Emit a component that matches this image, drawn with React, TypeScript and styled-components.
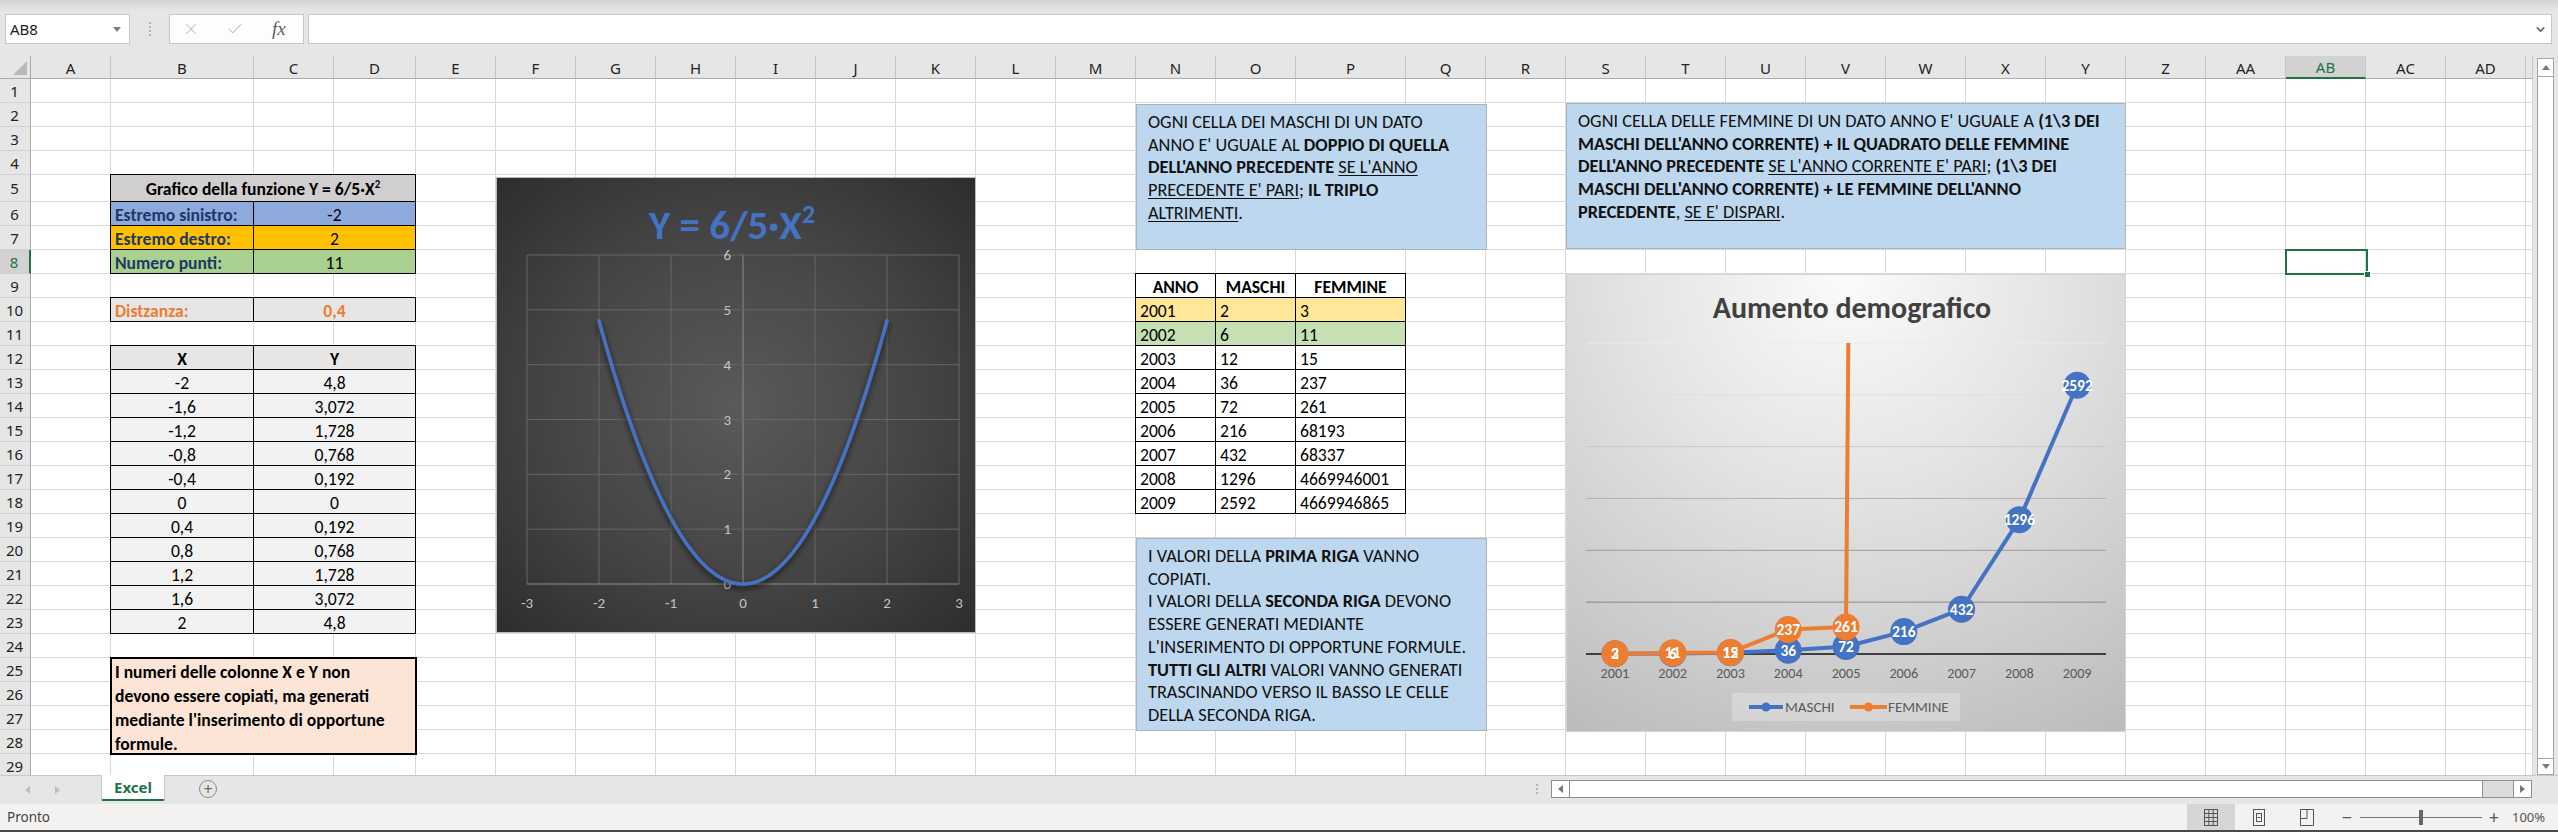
import React, { ReactNode } from 'react';
import styled, { createGlobalStyle } from 'styled-components';
import { X, Check, ChevronDown } from 'lucide-react';

const GREEN = '#217346';
const CELL_FONT = `"Carlito", "Lato", "Open Sans", sans-serif`;
const UI_FONT = `"Noto Sans", "Open Sans", sans-serif`;

const COLS = ['A','B','C','D','E','F','G','H','I','J','K','L','M','N','O','P','Q','R','S','T','U','V','W','X','Y','Z','AA','AB','AC','AD'];
const colWidth = (c: string) => (c === 'B' ? 143 : c === 'D' ? 82 : c === 'P' ? 110 : 80);
const ROWS = Array.from({ length: 29 }, (_, i) => i + 1);
const rowHeight = (r: number) => (r === 5 ? 27 : 24);

const GlobalStyle = createGlobalStyle`
  html, body { margin: 0; padding: 0; background: #e6e6e6; overflow: hidden; }
  *, *::before, *::after { box-sizing: border-box; }
`;

const Window = styled.div`
  width: 2558px;
  height: 832px;
  display: flex;
  flex-direction: column;
  background: #e6e6e6;
  font-family: ${UI_FONT};
  color: #222;
  overflow: hidden;
`;

/* ---------- formula bar ---------- */
const FormulaBar = styled.div`
  flex: none;
  height: 56px;
  display: flex;
  align-items: flex-start;
  padding: 14px 6px 0 5px;
  background: linear-gradient(180deg, #d2d2d2 0px, #e0e0e0 6px, #e6e6e6 12px);
`;
const NameBox = styled.div`
  width: 125px;
  height: 30px;
  background: #fff;
  border: 1px solid #c6c6c6;
  display: flex;
  align-items: center;
  justify-content: space-between;
  padding: 0 8px 0 4px;
  font-size: 15px;
  color: #1e1e1e;
`;
const Caret = styled.span`
  width: 0;
  height: 0;
  border-left: 4px solid transparent;
  border-right: 4px solid transparent;
  border-top: 5px solid #808080;
`;
const Grip = styled.div`
  width: 39px;
  height: 30px;
  display: flex;
  align-items: center;
  justify-content: center;
  &::before {
    content: '';
    width: 2px;
    height: 14px;
    background: repeating-linear-gradient(#b4b4b4 0 2px, transparent 2px 4px);
  }
`;
const FxButtons = styled.div`
  width: 135px;
  height: 30px;
  background: #fdfdfd;
  border: 1px solid #c6c6c6;
  display: flex;
  align-items: center;
  padding-left: 12px;
  gap: 26px;
  color: #bdbdbd;
`;
const Fx = styled.span`
  font-family: "Liberation Serif", serif;
  font-style: italic;
  font-size: 19px;
  color: #5e5e5e;
  margin-left: 2px;
`;
const FormulaInput = styled.div`
  flex: 1;
  margin-left: 4px;
  height: 30px;
  background: #fff;
  border: 1px solid #c6c6c6;
  display: flex;
  align-items: center;
  justify-content: flex-end;
  padding-right: 4px;
  color: #6a6a6a;
`;

/* ---------- sheet ---------- */
const SheetArea = styled.div`
  flex: none;
  height: 719px;
  display: flex;
`;
const Viewport = styled.div`
  position: relative;
  width: 2533px;
  height: 719px;
  overflow: hidden;
  background: #fff;
`;
const Grid = styled.div`
  display: grid;
  grid-template-columns: 31px ${COLS.map((c) => `${colWidth(c)}px`).join(' ')} 7px;
  grid-template-rows: 23px ${ROWS.map((r) => `${rowHeight(r)}px`).join(' ')};
`;
const Corner = styled.div`
  position: relative;
  background: #e6e6e6;
  border-right: 1px solid #ababab;
  border-bottom: 1px solid #ababab;
  &::after {
    content: '';
    position: absolute;
    right: 3px;
    bottom: 3px;
    border-style: solid;
    border-width: 0 0 14px 14px;
    border-color: transparent transparent #b9b9b9 transparent;
  }
`;
const ColHead = styled.div<{ $sel?: boolean }>`
  background: ${(p) => (p.$sel ? '#d2d2d2' : '#e6e6e6')};
  border-right: 1px solid #c4c4c4;
  border-bottom: ${(p) => (p.$sel ? `2px solid ${GREEN}` : '1px solid #ababab')};
  color: ${(p) => (p.$sel ? GREEN : '#222')};
  display: flex;
  align-items: center;
  justify-content: center;
  font-size: 15px;
  padding-top: 1px;
`;
const RowHead = styled.div<{ $sel?: boolean }>`
  background: ${(p) => (p.$sel ? '#d2d2d2' : '#e6e6e6')};
  border-bottom: 1px solid #d0d0d0;
  border-right: ${(p) => (p.$sel ? `2px solid ${GREEN}` : '1px solid #ababab')};
  color: ${(p) => (p.$sel ? GREEN : '#222')};
  display: flex;
  align-items: center;
  justify-content: center;
  font-size: 15px;
  padding-right: 1px;
`;
const Cell = styled.div`
  background: #fff;
  border-right: 1px solid #d9d9d9;
  border-bottom: 1px solid #d9d9d9;
`;
const DataCell = styled.div<{ $span: number; $bg: string; $color: string; $bold: boolean; $align: 'left' | 'center' }>`
  grid-column: span ${(p) => p.$span};
  position: relative;
  z-index: 1;
  margin: -1px 0 0 -1px;
  border: 1px solid #000;
  background: ${(p) => p.$bg};
  color: ${(p) => p.$color};
  font-family: ${CELL_FONT};
  font-size: 17.6px;
  font-weight: ${(p) => (p.$bold ? 700 : 400)};
  display: flex;
  align-items: center;
  justify-content: ${(p) => (p.$align === 'center' ? 'center' : 'flex-start')};
  padding: 2px 4px 0;
  white-space: nowrap;
`;
const NoteCell = styled.div`
  grid-column: span 3;
  grid-row: span 4;
  position: relative;
  z-index: 1;
  margin: -1px;
  border: 2px solid #000;
  background: #fce4d6;
  color: #000;
  font-family: ${CELL_FONT};
  font-size: 17.6px;
  font-weight: 700;
  line-height: 24px;
  padding: 1px 3px 0;
  white-space: nowrap;
`;
const Sup = styled.sup`
  font-size: 11px;
  vertical-align: 7px;
  line-height: 0;
`;

/* ---------- floating objects ---------- */
const Floating = styled.div<{ $x: number; $y: number; $w: number; $h: number }>`
  position: absolute;
  left: ${(p) => p.$x}px;
  top: ${(p) => p.$y}px;
  width: ${(p) => p.$w}px;
  height: ${(p) => p.$h}px;
  z-index: 2;
`;
const TextBox = styled(Floating)`
  background: #bdd7ee;
  border: 1px solid #a9b4bf;
  padding: 6px 11px;
  font-family: ${CELL_FONT};
  font-size: 18.3px;
  line-height: 22.7px;
  color: #111;
`;
const Line = styled.div`
  white-space: nowrap;
`;
const B = styled.b`
  font-weight: 700;
`;
const U = styled.span`
  text-decoration: underline;
  text-underline-offset: 2px;
`;
const DarkChart = styled(Floating)`
  border: 1px solid #bcbcbc;
  background: radial-gradient(ellipse 72% 72% at 50% 50%, #5a5a5a 0%, #444 55%, #2c2c2c 100%);
`;
const LightChart = styled(Floating)`
  border: 1px solid #d4d4d4;
  background: radial-gradient(ellipse 95% 115% at 50% 0%, #fbfbfb 0%, #e4e4e4 40%, #cacaca 80%, #bcbcbc 100%);
`;
const Selection = styled.div`
  position: absolute;
  left: 2285px;
  top: 193px;
  width: 83px;
  height: 26px;
  border: 2px solid ${GREEN};
  z-index: 3;
  &::after {
    content: '';
    position: absolute;
    right: -5px;
    bottom: -5px;
    width: 7px;
    height: 7px;
    background: ${GREEN};
    border: 1px solid #fff;
  }
`;

/* ---------- vertical scrollbar ---------- */
const VScroll = styled.div`
  width: 25px;
  height: 719px;
  display: flex;
  flex-direction: column;
  padding: 2px 4px 0 4px;
  background: #e6e6e6;
`;
const ScrollBtn = styled.div<{ $h: number }>`
  flex: none;
  height: ${(p) => p.$h}px;
  background: #fff;
  border: 1px solid #a6a6a6;
  display: flex;
  align-items: center;
  justify-content: center;
`;
const ScrollTrack = styled.div`
  flex: 1;
  background: #fff;
  border-left: 1px solid #a6a6a6;
  border-right: 1px solid #a6a6a6;
`;
const Tri = styled.span<{ $dir: 'up' | 'down' | 'left' | 'right'; $c?: string }>`
  width: 0;
  height: 0;
  border: 4px solid transparent;
  ${(p) =>
    p.$dir === 'up'
      ? `border-bottom: 5px solid ${p.$c || '#7a7a7a'}; border-top-width: 0;`
      : p.$dir === 'down'
      ? `border-top: 5px solid ${p.$c || '#7a7a7a'}; border-bottom-width: 0;`
      : p.$dir === 'left'
      ? `border-right: 5px solid ${p.$c || '#7a7a7a'}; border-left-width: 0;`
      : `border-left: 5px solid ${p.$c || '#7a7a7a'}; border-right-width: 0;`}
`;

/* ---------- tab bar ---------- */
const TabBar = styled.div`
  flex: none;
  height: 29px;
  display: flex;
  align-items: flex-start;
  background: #e6e6e6;
  border-top: 1px solid #c8c8c8;
`;
const TabNav = styled.div`
  width: 102px;
  height: 28px;
  display: flex;
  align-items: center;
  padding-left: 25px;
  gap: 25px;
`;
const SheetTab = styled.div`
  width: 62px;
  height: 26px;
  margin-top: -1px;
  background: #fff;
  border-bottom: 2px solid ${GREEN};
  box-shadow: 1px 0 0 #c8c8c8, -1px 0 0 #c8c8c8;
  color: ${GREEN};
  font-weight: 700;
  font-size: 15px;
  display: flex;
  align-items: center;
  justify-content: center;
`;
const AddSheet = styled.div`
  width: 18px;
  height: 18px;
  margin: 4px 0 0 35px;
  border: 1px solid #8a8a8a;
  border-radius: 50%;
  display: flex;
  align-items: center;
  justify-content: center;
  color: #6e6e6e;
  font-size: 16px;
  line-height: 1;
`;
const Spacer = styled.div`
  flex: 1;
`;
const HGrip = styled.div`
  width: 19px;
  height: 28px;
  display: flex;
  align-items: center;
  padding-left: 4px;
  &::before {
    content: '';
    width: 2px;
    height: 12px;
    background: repeating-linear-gradient(#b4b4b4 0 2px, transparent 2px 4px);
  }
`;
const HScroll = styled.div`
  width: 981px;
  height: 18px;
  margin: 4px 26px 0 0;
  display: flex;
  border: 1px solid #8e8e8e;
  background: #dcdcdc;
`;
const HBtn = styled.div`
  width: 17px;
  background: #fff;
  display: flex;
  align-items: center;
  justify-content: center;
`;
const HThumb = styled.div`
  width: 914px;
  background: #fff;
  border-left: 1px solid #8e8e8e;
  border-right: 1px solid #8e8e8e;
`;
const HTrack = styled.div`
  flex: 1;
  border-right: 1px solid #8e8e8e;
`;

/* ---------- status bar ---------- */
const StatusBar = styled.div`
  flex: none;
  height: 28px;
  display: flex;
  align-items: stretch;
  background: #f3f2f1;
  border-bottom: 2px solid #4a4a4a;
  font-size: 13.5px;
  color: #444;
`;
const Ready = styled.div`
  flex: 1;
  display: flex;
  align-items: center;
  padding-left: 7px;
`;
const ViewBtn = styled.div<{ $active?: boolean }>`
  width: 48px;
  display: flex;
  align-items: center;
  justify-content: center;
  background: ${(p) => (p.$active ? '#d6d6d6' : 'transparent')};
`;
const ZoomSign = styled.div<{ $ml: number }>`
  width: 16px;
  margin-left: ${(p) => p.$ml}px;
  display: flex;
  align-items: center;
  justify-content: center;
  font-size: 18px;
  color: #555;
`;
const Slider = styled.div`
  width: 122px;
  margin-left: 5px;
  display: flex;
  align-items: center;
  justify-content: center;
  background: linear-gradient(#777, #777) center / 100% 1px no-repeat;
  &::after {
    content: '';
    width: 4px;
    height: 15px;
    background: #666;
  }
`;
const Percent = styled.div`
  width: 40px;
  margin: 0 6px 0 10px;
  display: flex;
  align-items: center;
  font-size: 13px;
  color: #555;
`;

/* ---------- data ---------- */
type Tone =
  | 'title' | 'blueLbl' | 'blueVal' | 'orangeLbl' | 'orangeVal' | 'greenLbl' | 'greenVal'
  | 'distLbl' | 'distVal' | 'xyHead' | 'xyVal' | 'tHead' | 'tVal' | 'tYellow' | 'tGreen';

const TONES: Record<Tone, { bg: string; color: string; bold: boolean; align: 'left' | 'center' }> = {
  title: { bg: '#d0cece', color: '#000', bold: true, align: 'center' },
  blueLbl: { bg: '#8ea9db', color: '#203864', bold: true, align: 'left' },
  blueVal: { bg: '#8ea9db', color: '#000', bold: false, align: 'center' },
  orangeLbl: { bg: '#ffc000', color: '#203864', bold: true, align: 'left' },
  orangeVal: { bg: '#ffc000', color: '#000', bold: false, align: 'center' },
  greenLbl: { bg: '#a9d08e', color: '#203864', bold: true, align: 'left' },
  greenVal: { bg: '#a9d08e', color: '#000', bold: false, align: 'center' },
  distLbl: { bg: '#e7e6e6', color: '#ed7d31', bold: true, align: 'left' },
  distVal: { bg: '#e7e6e6', color: '#ed7d31', bold: true, align: 'center' },
  xyHead: { bg: '#e7e6e6', color: '#000', bold: true, align: 'center' },
  xyVal: { bg: '#f2f2f2', color: '#000', bold: false, align: 'center' },
  tHead: { bg: '#fff', color: '#000', bold: true, align: 'center' },
  tVal: { bg: '#fff', color: '#000', bold: false, align: 'left' },
  tYellow: { bg: '#ffe699', color: '#000', bold: false, align: 'left' },
  tGreen: { bg: '#c6e0b4', color: '#000', bold: false, align: 'left' },
};

type Spec = { r: number; c: number; span?: number; rows?: number; tone: Tone | 'note'; text: ReactNode };

const XS = ['-2', '-1,6', '-1,2', '-0,8', '-0,4', '0', '0,4', '0,8', '1,2', '1,6', '2'];
const YS = ['4,8', '3,072', '1,728', '0,768', '0,192', '0', '0,192', '0,768', '1,728', '3,072', '4,8'];
const YEARS = [2001, 2002, 2003, 2004, 2005, 2006, 2007, 2008, 2009];
const MASCHI = [2, 6, 12, 36, 72, 216, 432, 1296, 2592];
const FEMMINE = [3, 11, 15, 237, 261, 68193, 68337, 4669946001, 4669946865];

const SPECS: Spec[] = [
  { r: 5, c: 1, span: 3, tone: 'title', text: <span>Grafico della funzione Y = 6/5·X<Sup>2</Sup></span> },
  { r: 6, c: 1, tone: 'blueLbl', text: 'Estremo sinistro:' },
  { r: 6, c: 2, span: 2, tone: 'blueVal', text: '-2' },
  { r: 7, c: 1, tone: 'orangeLbl', text: 'Estremo destro:' },
  { r: 7, c: 2, span: 2, tone: 'orangeVal', text: '2' },
  { r: 8, c: 1, tone: 'greenLbl', text: 'Numero punti:' },
  { r: 8, c: 2, span: 2, tone: 'greenVal', text: '11' },
  { r: 10, c: 1, tone: 'distLbl', text: 'Distzanza:' },
  { r: 10, c: 2, span: 2, tone: 'distVal', text: '0,4' },
  { r: 12, c: 1, tone: 'xyHead', text: 'X' },
  { r: 12, c: 2, span: 2, tone: 'xyHead', text: 'Y' },
  ...XS.flatMap((x, i): Spec[] => [
    { r: 13 + i, c: 1, tone: 'xyVal', text: x },
    { r: 13 + i, c: 2, span: 2, tone: 'xyVal', text: YS[i] },
  ]),
  {
    r: 25, c: 1, span: 3, rows: 4, tone: 'note',
    text: (
      <>
        <Line>I numeri delle colonne X e Y non</Line>
        <Line>devono essere copiati, ma generati</Line>
        <Line>mediante l'inserimento di opportune</Line>
        <Line>formule.</Line>
      </>
    ),
  },
  { r: 9, c: 13, tone: 'tHead', text: 'ANNO' },
  { r: 9, c: 14, tone: 'tHead', text: 'MASCHI' },
  { r: 9, c: 15, tone: 'tHead', text: 'FEMMINE' },
  ...YEARS.flatMap((y, i): Spec[] => {
    const tone: Tone = i === 0 ? 'tYellow' : i === 1 ? 'tGreen' : 'tVal';
    return [
      { r: 10 + i, c: 13, tone, text: String(y) },
      { r: 10 + i, c: 14, tone, text: String(MASCHI[i]) },
      { r: 10 + i, c: 15, tone, text: String(FEMMINE[i]) },
    ];
  }),
];

function buildCells(): ReactNode[] {
  const byPos = new Map<string, Spec>();
  const covered = new Set<string>();
  SPECS.forEach((s) => {
    byPos.set(`${s.r}:${s.c}`, s);
    for (let dr = 0; dr < (s.rows || 1); dr++)
      for (let dc = 0; dc < (s.span || 1); dc++)
        if (dr || dc) covered.add(`${s.r + dr}:${s.c + dc}`);
  });
  const out: ReactNode[] = [<Corner key="corner" />];
  COLS.forEach((c) => out.push(<ColHead key={`h${c}`} $sel={c === 'AB'}>{c}</ColHead>));
  out.push(<ColHead key="hfill" />);
  ROWS.forEach((r) => {
    out.push(<RowHead key={`r${r}`} $sel={r === 8}>{r}</RowHead>);
    COLS.forEach((_, c) => {
      const key = `${r}:${c}`;
      if (covered.has(key)) return;
      const s = byPos.get(key);
      if (!s) {
        out.push(<Cell key={key} />);
      } else if (s.tone === 'note') {
        out.push(<NoteCell key={key}>{s.text}</NoteCell>);
      } else {
        const t = TONES[s.tone];
        out.push(
          <DataCell key={key} $span={s.span || 1} $bg={t.bg} $color={t.color} $bold={t.bold} $align={t.align}>
            {s.text}
          </DataCell>
        );
      }
    });
    out.push(<Cell key={`f${r}`} />);
  });
  return out;
}

/* ---------- charts ---------- */
function ParabolaChart() {
  const px = (x: number) => 247 + 72 * x;
  const py = (y: number) => 407 - 54.833 * y;
  const pts: string[] = [];
  for (let i = 0; i <= 80; i++) {
    const x = -2 + i * 0.05;
    pts.push(`${px(x).toFixed(2)},${py(1.2 * x * x).toFixed(2)}`);
  }
  const ticksX = [-3, -2, -1, 0, 1, 2, 3];
  const ticksY = [0, 1, 2, 3, 4, 5, 6];
  return (
    <DarkChart $x={496} $y={121} $w={480} $h={456}>
      <svg width="478" height="454" viewBox="1 1 478 454" fontFamily={CELL_FONT}>
        <defs>
          <filter id="curveShadow" x="-20%" y="-20%" width="140%" height="140%">
            <feDropShadow dx="0" dy="3" stdDeviation="3" floodColor="#000" floodOpacity="0.75" />
          </filter>
        </defs>
        <text x="236" y="62" textAnchor="middle" fontWeight="700" fontSize="41" fill="#4472c4">
          Y = 6/5·X<tspan fontSize="26" dy="-16">2</tspan>
        </text>
        {ticksX.map((k) => (
          <line key={`vx${k}`} x1={px(k)} x2={px(k)} y1={78} y2={407} stroke={k === 0 ? '#8c8c8c' : '#676767'} strokeWidth="1" />
        ))}
        {ticksY.map((j) => (
          <line key={`hy${j}`} x1={31} x2={463} y1={py(j)} y2={py(j)} stroke={j === 0 ? '#8c8c8c' : '#676767'} strokeWidth="1" />
        ))}
        {ticksY.map((j) => (
          <text key={`ly${j}`} x="235" y={py(j) + 5} textAnchor="end" fontSize="15" fill="#c4c4c4">
            {j}
          </text>
        ))}
        {ticksX.map((k) => (
          <text key={`lx${k}`} x={px(k)} y="431" textAnchor="middle" fontSize="15" fill="#c4c4c4">
            {k}
          </text>
        ))}
        <polyline
          points={pts.join(' ')}
          fill="none"
          stroke="#4472c4"
          strokeWidth="3.5"
          strokeLinecap="round"
          strokeLinejoin="round"
          filter="url(#curveShadow)"
        />
      </svg>
    </DarkChart>
  );
}

function DemographyChart() {
  const cx = (i: number) => 48.9 + 57.78 * i;
  const cy = (v: number) => 380 - v * 0.10367;
  const gridColors = ['#ececec', '#dedede', '#c9c9c9', '#b3b3b3', '#9c9c9c', '#8a8a8a'];
  const mPts = MASCHI.map((v, i) => `${cx(i)},${cy(v)}`).join(' ');
  const fPts = FEMMINE.slice(0, 6).map((v, i) => `${cx(i)},${cy(v)}`).join(' ');
  return (
    <LightChart $x={1566} $y={218} $w={560} $h={458}>
      <svg width="558" height="456" viewBox="1 1 558 456" fontFamily={CELL_FONT}>
        <defs>
          <clipPath id="plotClip">
            <rect x="0" y="69" width="560" height="340" />
          </clipPath>
        </defs>
        <text x="286" y="44" textAnchor="middle" fontWeight="700" fontSize="30" fill="#404040">
          Aumento demografico
        </text>
        {gridColors.map((c, k) => (
          <line key={`g${k}`} x1="20" x2="540" y1={69 + 51.83 * k} y2={69 + 51.83 * k} stroke={c} strokeWidth="1" />
        ))}
        <line x1="20" x2="540" y1="380" y2="380" stroke="#3f3f3f" strokeWidth="2" />
        {YEARS.map((y, i) => (
          <text key={`y${y}`} x={cx(i)} y="404" textAnchor="middle" fontSize="14.2" fill="#595959">
            {y}
          </text>
        ))}
        <polyline points={mPts} fill="none" stroke="#4472c4" strokeWidth="4" strokeLinejoin="round" />
        {MASCHI.map((v, i) => (
          <circle key={`mc${i}`} cx={cx(i)} cy={cy(v)} r="13.5" fill="#4472c4" />
        ))}
        <polyline points={fPts} fill="none" stroke="#ed7d31" strokeWidth="4" strokeLinejoin="round" clipPath="url(#plotClip)" />
        {FEMMINE.slice(0, 5).map((v, i) => (
          <circle key={`fc${i}`} cx={cx(i)} cy={cy(v)} r="13.5" fill="#ed7d31" />
        ))}
        {MASCHI.map((v, i) => (
          <text key={`ml${i}`} x={cx(i)} y={cy(v) + 5.5} textAnchor="middle" fontSize="15.5" fontWeight="700" fill="#fff">
            {v}
          </text>
        ))}
        {FEMMINE.slice(0, 5).map((v, i) => (
          <text key={`fl${i}`} x={cx(i)} y={cy(v) + 5.5} textAnchor="middle" fontSize="15.5" fontWeight="700" fill="#fff">
            {v}
          </text>
        ))}
        <rect x="166" y="419" width="228" height="28" fill="#fff" fillOpacity="0.25" />
        <line x1="183" x2="217" y1="433" y2="433" stroke="#4472c4" strokeWidth="4" />
        <circle cx="200" cy="433" r="4.5" fill="#4472c4" />
        <text x="219" y="438" fontSize="15" fill="#595959">MASCHI</text>
        <line x1="284" x2="321" y1="433" y2="433" stroke="#ed7d31" strokeWidth="4" />
        <circle cx="302.5" cy="433" r="4.5" fill="#ed7d31" />
        <text x="322" y="438" fontSize="15" fill="#595959">FEMMINE</text>
      </svg>
    </LightChart>
  );
}

/* ---------- status icons ---------- */
const NormalIcon = () => (
  <svg width="16" height="19" viewBox="0 0 16 19">
    <rect x="1.5" y="1.5" width="13" height="16" fill="none" stroke="#555" />
    <path d="M5.8 1.5v16M10.2 1.5v16M1.5 5.5h13M1.5 9.5h13M1.5 13.5h13" stroke="#555" />
  </svg>
);
const PageIcon = () => (
  <svg width="14" height="19" viewBox="0 0 14 19">
    <rect x="1.5" y="1.5" width="11" height="16" fill="none" stroke="#555" />
    <rect x="4.5" y="5.5" width="5" height="8" fill="none" stroke="#555" />
    <path d="M5.5 9.5h3" stroke="#555" />
  </svg>
);
const BreakIcon = () => (
  <svg width="16" height="19" viewBox="0 0 16 19">
    <path d="M1.5 1.5h13v16h-13zM8 1.5v9M1.5 10.5h6.5" fill="none" stroke="#555" />
  </svg>
);

export default function App() {
  return (
    <Window>
      <GlobalStyle />
      <FormulaBar>
        <NameBox>
          AB8
          <Caret />
        </NameBox>
        <Grip />
        <FxButtons>
          <X size={18} strokeWidth={1.4} />
          <Check size={18} strokeWidth={1.4} />
          <Fx>fx</Fx>
        </FxButtons>
        <FormulaInput>
          <ChevronDown size={13} strokeWidth={3} />
        </FormulaInput>
      </FormulaBar>

      <SheetArea>
        <Viewport>
          <Grid>{buildCells()}</Grid>

          <TextBox $x={1136} $y={48} $w={351} $h={146}>
            <Line>OGNI CELLA DEI MASCHI DI UN DATO</Line>
            <Line>
              ANNO E' UGUALE AL <B>DOPPIO DI QUELLA</B>
            </Line>
            <Line>
              <B>DELL'ANNO PRECEDENTE</B> <U>SE L'ANNO</U>
            </Line>
            <Line>
              <U>PRECEDENTE E' PARI</U>; <B>IL TRIPLO</B>
            </Line>
            <Line>
              <U>ALTRIMENTI</U>.
            </Line>
          </TextBox>

          <TextBox $x={1136} $y={482} $w={351} $h={193}>
            <Line>
              I VALORI DELLA <B>PRIMA RIGA</B> VANNO
            </Line>
            <Line>COPIATI.</Line>
            <Line>
              I VALORI DELLA <B>SECONDA RIGA</B> DEVONO
            </Line>
            <Line>ESSERE GENERATI MEDIANTE</Line>
            <Line>L'INSERIMENTO DI OPPORTUNE FORMULE.</Line>
            <Line>
              <B>TUTTI GLI ALTRI</B> VALORI VANNO GENERATI
            </Line>
            <Line>TRASCINANDO VERSO IL BASSO LE CELLE</Line>
            <Line>DELLA SECONDA RIGA.</Line>
          </TextBox>

          <TextBox $x={1566} $y={47} $w={560} $h={146}>
            <Line>
              OGNI CELLA DELLE FEMMINE DI UN DATO ANNO E' UGUALE A <B>(1\3 DEI</B>
            </Line>
            <Line>
              <B>MASCHI DELL'ANNO CORRENTE) + IL QUADRATO DELLE FEMMINE</B>
            </Line>
            <Line>
              <B>DELL'ANNO PRECEDENTE</B> <U>SE L'ANNO CORRENTE E' PARI</U>; <B>(1\3 DEI</B>
            </Line>
            <Line>
              <B>MASCHI DELL'ANNO CORRENTE) + LE FEMMINE DELL'ANNO</B>
            </Line>
            <Line>
              <B>PRECEDENTE</B>, <U>SE E' DISPARI</U>.
            </Line>
          </TextBox>

          <ParabolaChart />
          <DemographyChart />
          <Selection />
        </Viewport>
        <VScroll>
          <ScrollBtn $h={19}>
            <Tri $dir="up" />
          </ScrollBtn>
          <ScrollTrack />
          <ScrollBtn $h={17}>
            <Tri $dir="down" />
          </ScrollBtn>
        </VScroll>
      </SheetArea>

      <TabBar>
        <TabNav>
          <Tri $dir="left" $c="#bdbdbd" />
          <Tri $dir="right" $c="#bdbdbd" />
        </TabNav>
        <SheetTab>Excel</SheetTab>
        <AddSheet>+</AddSheet>
        <Spacer />
        <HGrip />
        <HScroll>
          <HBtn>
            <Tri $dir="left" $c="#777" />
          </HBtn>
          <HThumb />
          <HTrack />
          <HBtn>
            <Tri $dir="right" $c="#777" />
          </HBtn>
        </HScroll>
      </TabBar>

      <StatusBar>
        <Ready>Pronto</Ready>
        <ViewBtn $active>
          <NormalIcon />
        </ViewBtn>
        <ViewBtn>
          <PageIcon />
        </ViewBtn>
        <ViewBtn>
          <BreakIcon />
        </ViewBtn>
        <ZoomSign $ml={8}>−</ZoomSign>
        <Slider />
        <ZoomSign $ml={4}>+</ZoomSign>
        <Percent>100%</Percent>
      </StatusBar>
    </Window>
  );
}
